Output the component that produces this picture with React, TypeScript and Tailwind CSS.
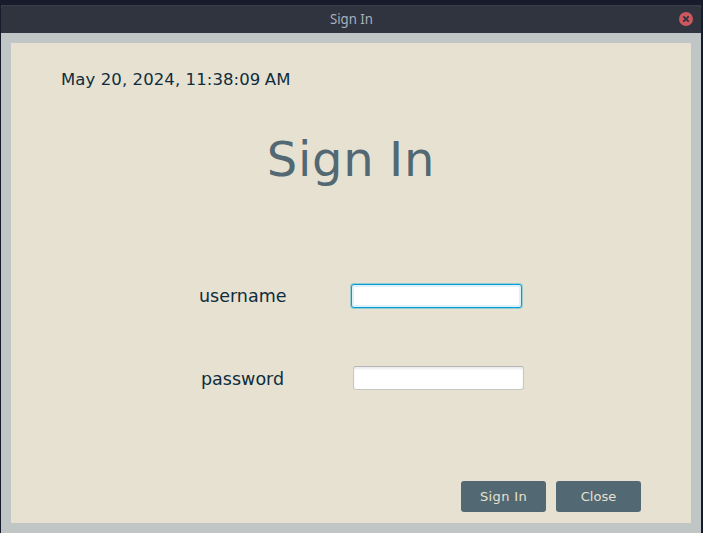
export default function App() {
  return (
    <div className="h-[533px] w-[703px] overflow-hidden bg-[#161c2b] px-px pt-[5px] font-['DejaVu_Sans',sans-serif]">
      <div className="flex h-[528px] w-[700px] flex-col overflow-hidden rounded-t-[3px] bg-[#bfc6c5]">
        <header className="grid h-7 shrink-0 grid-cols-[1fr_auto_1fr] items-center border-t border-[#393e49] bg-[#2f343f] pb-[2px]">
          <span />
          <span className="-mt-[2px] scale-x-[0.88] font-['Noto_Sans',sans-serif] text-[15px] leading-5 text-[#a9b0bd]">Sign In</span>
          <svg className="mr-2 justify-self-end" width="14" height="14" viewBox="0 0 14 14">
            <circle cx="7" cy="7" r="7" fill="#cc575d" />
            <path d="M4.3 4.3l5.4 5.4m0-5.4l-5.4 5.4" stroke="#2f343f" strokeWidth="1.9" />
          </svg>
        </header>
        <main className="mx-2.5 mt-2.5 h-[480px] bg-[#e6e1d1] text-[#0f2d3d]">
          <div className="pl-[50px] pt-[27px] text-[16.5px] leading-5 tracking-[0.09px]">
            May 20, 2024, 11:38:09 <span className="-ml-[1px]">AM</span>
          </div>
          <h1 className="mt-[40px] text-center text-[48px] leading-[58px] tracking-[0.8px] [word-spacing:-1.5px] text-[#526873]">Sign In</h1>
          <div className="mt-[96px] flex h-6 items-center">
            <label className="w-[340px] pl-[188px] pt-px text-[17.5px]">username</label>
            <input className="h-6 w-[171px] rounded-[3px] border border-[#039ed3] bg-white shadow-[0_0_0_1px_#039ed355,inset_0_0_0_2px_#dff1f8] outline-none" />
          </div>
          <div className="mt-[58px] flex h-6 items-center">
            <label className="w-[342px] pl-[190px] pt-[3px] text-[17.5px]">password</label>
            <input className="h-6 w-[171px] rounded-[3px] border border-[#c6c6c4] border-t-[#b5b5b5] bg-white shadow-[inset_0_2px_2px_#ececef] outline-none" />
          </div>
          <div className="mr-[50px] mt-[91px] flex justify-end gap-2.5 text-[13px] text-[#e6e1d1]">
            <button className="h-[31px] w-[85px] rounded-[3px] bg-[#526873] tracking-[0.35px]">Sign In</button>
            <button className="h-[31px] w-[85px] rounded-[3px] bg-[#526873]">Close</button>
          </div>
        </main>
      </div>
    </div>
  );
}
